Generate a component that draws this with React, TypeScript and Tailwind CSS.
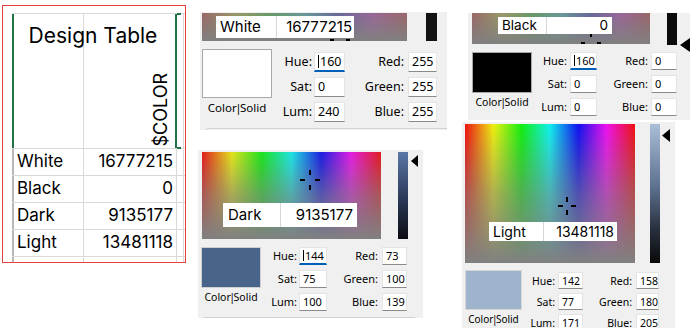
import React from "react";

// hue strip used by every picker (red → yellow → green → cyan → blue → magenta → red)
const hue =
  "bg-[linear-gradient(to_right,#ff0000,#ffff00,#00ff00,#00ffff,#0000ff,#ff00ff,#ff0000)]";
const ui = "font-['Noto_Sans',sans-serif]";
const xl = "font-['Inter','Liberation_Sans',sans-serif]";

function Crosshair({ gap, len, className }: { gap: number; len: number; className: string }) {
  const c = gap + len;
  const s = 2 * c;
  return (
    <svg width={s} height={s} className={`absolute ${className}`}>
      <rect x={0} y={c - 1} width={len} height={2} fill="#000" />
      <rect x={c + gap} y={c - 1} width={len} height={2} fill="#000" />
      <rect x={c - 1} y={0} width={2} height={len} fill="#000" />
      <rect x={c - 1} y={c + gap} width={2} height={len} fill="#000" />
    </svg>
  );
}

function Pointer({ className }: { className: string }) {
  return (
    <svg viewBox="0 0 10 14" preserveAspectRatio="none" className={`shrink-0 ${className}`}>
      <polygon points="0,7 10,0 10,14" fill="#000" />
    </svg>
  );
}

const SolidLabel = ({ className }: { className: string }) => (
  <span className={`mt-[2px] whitespace-nowrap ${className}`}>
    Color<span className="mx-[-1.5px]">|</span>Solid
  </span>
);

interface CellProps {
  name: string;
  value: string;
  className: string;
  nameCls: string;
  valueCls: string;
}

// the excel cell pasted over the colour field
const Cell = ({ name, value, className, nameCls, valueCls }: CellProps) => (
  <div className={`absolute flex bg-white text-black ${xl} ${className}`}>
    <div className={`flex items-center border-r border-[#d6d6d6] ${nameCls}`}>{name}</div>
    <div className={`flex flex-1 items-center justify-end ${valueCls}`}>{value}</div>
  </div>
);

const Box = ({
  children,
  className,
  focused,
}: {
  children: React.ReactNode;
  className: string;
  focused?: boolean;
}) => (
  <div
    className={`flex items-center bg-white pl-[3px] border border-[#e4e4e4] ${
      focused ? "border-b-2 border-b-[#005fb8]" : "border-b-[#8a8a8a]"
    } ${className}`}
  >
    {focused && <span className="mr-[1px] h-[75%] w-[1px] bg-black" />}
    {children}
  </div>
);

interface FieldsProps {
  values: string[];
  gridCls: string;
  boxCls: string;
  pad1: string;
  pad2: string;
  focus?: boolean;
}

function Fields({ values, gridCls, boxCls, pad1, pad2, focus = true }: FieldsProps) {
  const [h, s, l, r, g, b] = values;
  const rows = [
    ["Hue:", h, "Red:", r],
    ["Sat:", s, "Green:", g],
    ["Lum:", l, "Blue:", b],
  ];
  return (
    <div className={`grid items-center ${gridCls}`}>
      {rows.map(([a, av, c, cv], i) => (
        <React.Fragment key={a}>
          <span className={`text-right ${pad1}`}>{a}</span>
          <Box className={boxCls} focused={focus && i === 0}>
            {av}
          </Box>
          <span className={`text-right ${pad2}`}>{c}</span>
          <Box className={boxCls}>{cv}</Box>
        </React.Fragment>
      ))}
    </div>
  );
}

function DesignTable() {
  const rows = [
    ["White", "16777215"],
    ["Black", "0"],
    ["Dark", "9135177"],
    ["Light", "13481118"],
  ];
  return (
    <div
      className={`ml-[2px] mt-[5px] h-[258px] w-[184px] shrink-0 border border-[#e5403c] bg-white pl-[9px] pt-[7px] ${xl}`}
    >
      <div className="relative flex h-[135px] border-t border-[#d9d9d9]">
        <div className="w-[72px] border-l-2 border-r border-l-[#217346] border-r-[#d9d9d9]" />
        <div className="relative flex w-[93px] items-end justify-end border-r-2 border-[#217346] pb-[2px] pr-[3px]">
          <span className="rotate-180 text-[18px] leading-[22px] [writing-mode:vertical-rl]">$COLOR</span>
          <span className="absolute -right-[6px] -top-[1px] h-[2px] w-[4px] bg-[#217346]" />
          <span className="absolute -right-[6px] -bottom-[1px] h-[2px] w-[4px] bg-[#217346]" />
        </div>
        <div className="w-[7px] border-r border-[#d9d9d9]" />
        <div className="absolute left-0 top-[9px] w-[162px] text-center text-[21px] leading-[26px]">
          Design Table
        </div>
      </div>
      {rows.map(([n, v]) => (
        <div key={n} className="flex h-[27px] border-t border-[#d9d9d9] text-[17px]">
          <div className="flex w-[72px] items-center border-l-2 border-r border-l-[#b8b8b8] border-r-[#d9d9d9] pl-[3px]">
            {n}
          </div>
          <div className="flex w-[93px] items-center justify-end border-r border-[#d9d9d9] pr-[3px]">{v}</div>
          <div className="w-[7px] border-r border-[#d9d9d9]" />
        </div>
      ))}
      <div className="flex h-[6px] border-t border-[#d9d9d9]">
        <div className="w-[72px] border-l-2 border-r border-l-[#b8b8b8] border-r-[#d9d9d9]" />
        <div className="w-[93px] border-r border-[#d9d9d9]" />
        <div className="w-[7px] border-r border-[#d9d9d9]" />
      </div>
    </div>
  );
}

function WhitePanel() {
  return (
    <div className={`ml-[2px] mt-[12px] h-[118px] w-[247px] shrink-0 overflow-hidden bg-[#f0f0f0] ${ui}`}>
      <div className="flex h-[29px] items-start pl-[2px] pt-[1px]">
        <div className={`relative h-[28px] w-[205px] shrink-0 overflow-hidden ${hue}`}>
          <div className="h-full w-full bg-[linear-gradient(to_bottom,rgba(128,128,128,0.8),#808080)]" />
          <Crosshair gap={6} len={4} className="left-[128px] top-[17px]" />
          <Cell
            name="White"
            value="16777215"
            className="left-[14px] top-[3px] h-[22px] w-[138px] text-[15px]"
            nameCls="w-[61px] pl-[4px]"
            valueCls="pr-[2px]"
          />
        </div>
        <div className="ml-[19px] h-[28px] w-[11px] shrink-0 bg-[#131313]" />
      </div>
      <div className="mt-[8px] flex pl-[2px] text-[12.5px] leading-[16px]">
        <div className="flex w-[70px] flex-col items-center">
          <div className="h-[49px] w-[70px] border border-[#a8a8a8] bg-white" />
          <SolidLabel className="text-[11.5px]" />
        </div>
        <Fields
          values={["160", "0", "240", "255", "255", "255"]}
          gridCls="mt-[3px] grid-cols-[42px_31px_63px_29px] gap-y-[5px]"
          boxCls="h-[20px]"
          pad1="pr-[2px]"
          pad2="pr-[4px]"
        />
      </div>
      <div className="ml-[5px] mt-[6px] h-[6px] rounded-tl-[4px] border-l border-t border-[#d2d2d2]" />
    </div>
  );
}

function BlackPanel() {
  return (
    <div className={`ml-[6px] mt-[13px] h-[107px] w-[222px] shrink-0 overflow-hidden bg-[#f0f0f0] ${ui}`}>
      <div className="flex h-[31px] items-start pl-[4px]">
        <div className={`relative h-[31px] w-[178px] shrink-0 overflow-hidden ${hue}`}>
          <div className="h-full w-full bg-[linear-gradient(to_bottom,rgba(128,128,128,0.8),#808080)]" />
          <Crosshair gap={6} len={4} className="left-[109px] top-[20px]" />
          <Cell
            name="Black"
            value="0"
            className="left-[26px] top-[4px] h-[17px] w-[114px] text-[13.5px]"
            nameCls="w-[49px] pl-[4px]"
            valueCls="pr-[4px]"
          />
        </div>
        <div className="ml-[17px] h-[32px] w-[10px] shrink-0 bg-[#0b0b0b]" />
        <Pointer className="ml-[3px] mt-[25px] h-[14px] w-[10px]" />
      </div>
      <div className="mt-[8px] flex pl-[4px] text-[11px] leading-[14px]">
        <div className="flex w-[60px] flex-col items-center">
          <div className="h-[41px] w-[60px] border border-[#a8a8a8] bg-black" />
          <SolidLabel className="text-[10.5px]" />
        </div>
        <Fields
          values={["160", "0", "0", "0", "0", "0"]}
          gridCls="grid-cols-[38px_27px_54px_26px] gap-y-[5px]"
          boxCls="h-[18px]"
          pad1="pr-[3px]"
          pad2="pr-[3px]"
        />
      </div>
    </div>
  );
}

function DarkPanel() {
  return (
    <div className={`mt-[20px] h-[168px] w-[225px] shrink-0 overflow-hidden bg-[#f0f0f0] ${ui}`}>
      <div className="flex h-[89px] items-start pl-[4px] pt-[2px]">
        <div className={`relative h-[87px] w-[179px] shrink-0 overflow-hidden ${hue}`}>
          <div className="h-full w-full bg-[linear-gradient(to_bottom,rgba(128,128,128,0.22),rgba(128,128,128,0.68)_50%,#808080)]" />
          <Crosshair gap={5} len={5} className="left-[98px] top-[18px]" />
          <Cell
            name="Dark"
            value="9135177"
            className="left-[21px] top-[51px] h-[24px] w-[134px] text-[15px]"
            nameCls="w-[58px] pl-[5px]"
            valueCls="pr-[4px]"
          />
        </div>
        <div className="ml-[17px] h-[87px] w-[10px] shrink-0 bg-[linear-gradient(to_bottom,#5b77a6,#2a3856_55%,#0c0d12)]" />
        <Pointer className="ml-[3px] mt-[3px] h-[12px] w-[7px]" />
      </div>
      <div className="mt-[8px] flex pl-[3px] text-[11px] leading-[14px]">
        <div className="flex w-[60px] flex-col items-center">
          <div className="h-[41px] w-[60px] border border-[#d0d0d0] bg-[#49648b]" />
          <SolidLabel className="text-[10.5px]" />
        </div>
        <Fields
          values={["144", "75", "100", "73", "100", "139"]}
          gridCls="grid-cols-[38px_28px_55px_25px] gap-y-[5px]"
          boxCls="h-[18px]"
          pad1="pr-[2px]"
          pad2="pr-[4px]"
        />
      </div>
      <div className="ml-[5px] mt-[6px] h-[4px] w-[212px] border-t border-[#d2d2d2]" />
    </div>
  );
}

function LightPanel() {
  return (
    <div className={`mt-[2px] h-[206px] w-[213px] shrink-0 overflow-hidden bg-[#f0f0f0] ${ui}`}>
      <div className="flex h-[141px] items-start pl-[3px] pt-[2px]">
        <div className={`relative h-[139px] w-[170px] shrink-0 overflow-hidden ${hue}`}>
          <div className="h-full w-full bg-[linear-gradient(to_bottom,rgba(128,128,128,0.12),rgba(128,128,128,0.62)_50%,#808080)]" />
          <Crosshair gap={4} len={5} className="left-[93px] top-[73px]" />
          <Cell
            name="Light"
            value="13481118"
            className="left-[24px] top-[98px] h-[19px] w-[128px] text-[14px]"
            nameCls="w-[55px] pl-[4px]"
            valueCls="pr-[3px]"
          />
        </div>
        <div className="ml-[15px] h-[139px] w-[10px] shrink-0 bg-[linear-gradient(to_bottom,#aabed8,#5d7190_45%,#2a3240_75%,#080808)]" />
        <Pointer className="ml-[2px] mt-[5px] h-[13px] w-[8px]" />
      </div>
      <div className="mt-[7px] flex pl-[3px] text-[10.5px] leading-[14px]">
        <div className="flex w-[57px] flex-col items-center">
          <div className="h-[40px] w-[57px] border border-[#d6d6d6] bg-[#9eb4cd]" />
          <SolidLabel className="text-[10px]" />
        </div>
        <Fields
          values={["142", "77", "171", "158", "180", "205"]}
          gridCls="mt-[2px] grid-cols-[36px_25px_53px_23px] gap-y-[4px]"
          boxCls="h-[17px]"
          pad1="pr-[3px]"
          pad2="pr-[4px]"
          focus={false}
        />
      </div>
    </div>
  );
}

export default function App() {
  return (
    <div className="flex h-[335px] w-[690px] overflow-hidden bg-white text-black">
      <DesignTable />
      <div className="ml-[12px] flex w-[249px] shrink-0 flex-col">
        <WhitePanel />
        <DarkPanel />
      </div>
      <div className="ml-[15px] flex w-[228px] shrink-0 flex-col">
        <BlackPanel />
        <LightPanel />
      </div>
    </div>
  );
}
